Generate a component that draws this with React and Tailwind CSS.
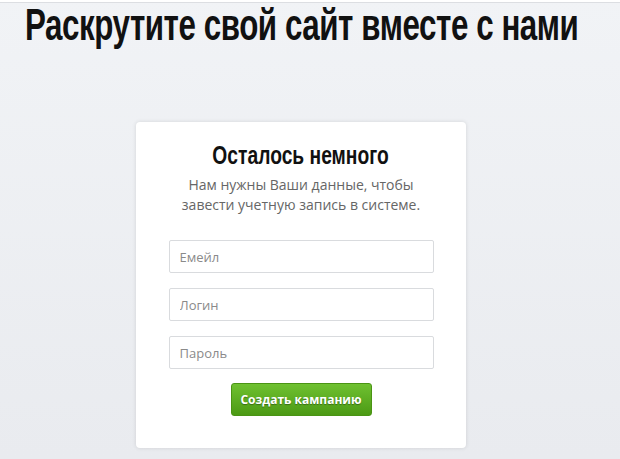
import React from 'react';

const Field = ({ placeholder, type = 'text' }) => (
    <input
        type={type}
        placeholder={placeholder}
        className="w-full h-[33px] px-[10px] border border-[#d9dbde] rounded-[2px] bg-white text-[13px] text-[#555] placeholder:text-[#8a8a8a] outline-none"
        style={{ fontFamily: '"Open Sans", "Noto Sans", sans-serif' }}
    />
);

const App = () => {
    return (
        <div className="w-[620px] h-[459px] overflow-hidden bg-gradient-to-b from-[#f1f3f6] to-[#e9ebef] flex flex-col">
            <div className="h-[3px] bg-white border-b border-[#dcdee2] shrink-0" />
            <h1
                className="pl-[25px] h-[37px] text-[36px] leading-[36px] font-bold text-[#111] whitespace-nowrap tracking-[-0.5px]"
                style={{ fontFamily: '"Liberation Sans", sans-serif' }}
            >
                <span className="inline-block origin-top-left scale-x-[0.87] scale-y-[1.22]">Раскрутите свой сайт вместе с нами</span>
            </h1>
            <div className="flex justify-center pt-[82px]">
                <div className="w-[330px] h-[326px] ml-[-18px] bg-white rounded-[4px] shadow-[0_0_4px_rgba(0,0,0,0.12)] flex flex-col items-center pt-[17px]">
                    <h2
                        className="text-[25px] leading-[32px] font-bold text-[#111] whitespace-nowrap"
                        style={{ fontFamily: '"Liberation Sans", sans-serif' }}
                    >
                        <span className="inline-block scale-x-[0.77]">Осталось немного</span>
                    </h2>
                    <p
                        className="mt-[4px] text-[14px] leading-[20px] text-[#666] text-center"
                        style={{ fontFamily: '"Open Sans", "Noto Sans", sans-serif' }}
                    >
                        Нам нужны Ваши данные, чтобы<br />завести учетную запись в системе.
                    </p>
                    <div className="w-[265px] mt-[25px] flex flex-col gap-[15px]">
                        <Field placeholder="Емейл" />
                        <Field placeholder="Логин" />
                        <Field placeholder="Пароль" type="password" />
                    </div>
                    <button
                        className="mt-[14px] w-[141px] h-[33px] rounded-[3px] bg-gradient-to-b from-[#6fc130] to-[#4c9a14] border border-[#4a9414] text-white text-[12px] font-bold [text-shadow:0_1px_1px_rgba(0,0,0,0.35)]"
                        style={{ fontFamily: '"Open Sans", "Noto Sans", sans-serif' }}
                    >
                        Создать кампанию
                    </button>
                </div>
            </div>
        </div>
    );
};

export default App;
